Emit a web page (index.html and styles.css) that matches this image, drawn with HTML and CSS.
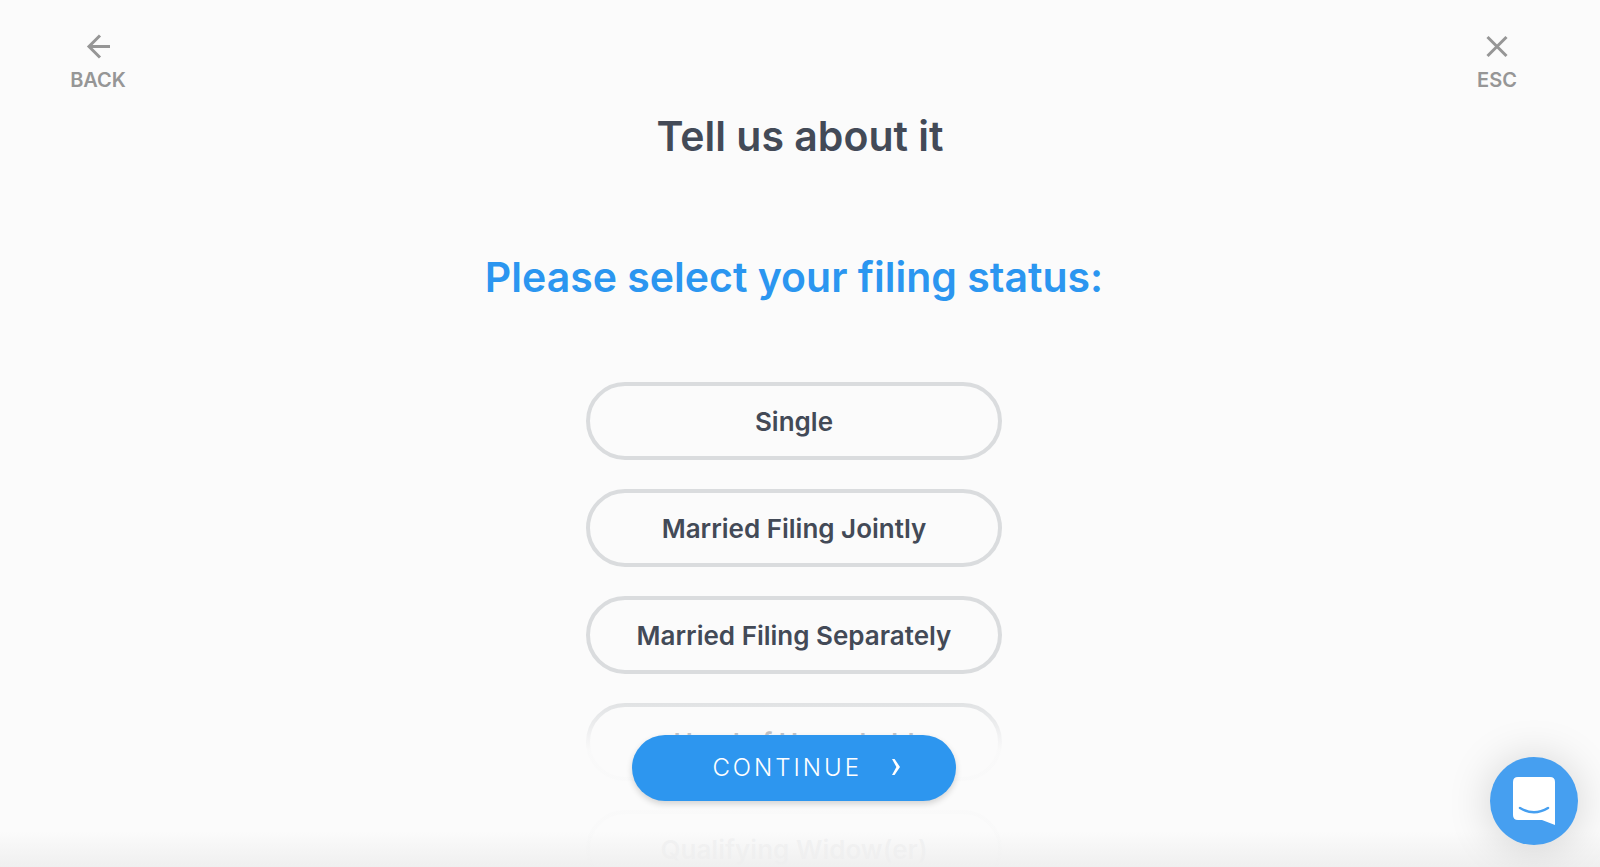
FILE: index.html
```html
<!DOCTYPE html>
<html lang="en">
<head>
<meta charset="utf-8">
<meta name="viewport" content="width=device-width, initial-scale=1">
<title>Tell us about it</title>
<link rel="stylesheet" href="styles.css">
</head>
<body>
<div class="page">
  <header class="topbar">
    <button class="nav-button" type="button">
      <svg class="nav-icon" viewBox="0 0 28 28" aria-hidden="true"><path d="M26 14.500H5M16 3.500L5 14.500L16 25.500"/></svg>
      <span>BACK</span>
    </button>
    <h1 class="title">Tell us about it</h1>
    <button class="nav-button nav-button-end" type="button">
      <svg class="nav-icon" viewBox="0 0 28 28" aria-hidden="true"><path d="M4.500 5L23.500 24M23.500 5L4.500 24"/></svg>
      <span>ESC</span>
    </button>
  </header>
  <main class="content">
    <h2 class="question">Please select your filing status:</h2>
    <div class="options">
      <button class="option" type="button">Single</button>
      <button class="option" type="button">Married Filing Jointly</button>
      <button class="option" type="button">Married Filing Separately</button>
      <button class="option" type="button">Head of Household</button>
      <button class="option" type="button">Qualifying Widow(er)</button>
    </div>
  </main>
  <footer class="footer">
    <button class="continue" type="button">
      <span>CONTINUE</span>
      <svg class="chevron" viewBox="0 0 10 18" aria-hidden="true"><path d="M1 1H3.600L9 9L3.600 17H1L5.400 9Z"/></svg>
    </button>
  </footer>
  <button class="chat" type="button" aria-label="Open chat">
    <svg class="chat-icon" viewBox="0 0 42 48" aria-hidden="true">
      <path d="M5 0H37Q42 0 42 5V48L29 43H5Q0 43 0 38V5Q0 0 5 0Z" fill="#fff"/>
      <path d="M7 31Q21 39.500 35 31" fill="none" stroke="#469ff0" stroke-width="2.500" stroke-linecap="round"/>
    </svg>
  </button>
</div>
</body>
</html>
```
FILE: styles.css
```css
* {
  box-sizing: border-box;
}

body {
  margin: 0;
  background: #fbfbfb;
  color: #434a57;
  font-family: Inter, "Liberation Sans", sans-serif;
}

button {
  border: 0;
  padding: 0;
  background: none;
  color: inherit;
  font: inherit;
  cursor: pointer;
}

.page {
  position: relative;
  height: 100vh;
  overflow: hidden;
}

.topbar {
  display: grid;
  grid-template-columns: 1fr auto 1fr;
  padding: 32px 70px 0;
}

.nav-button {
  display: flex;
  flex-direction: column;
  align-items: center;
  align-self: start;
  justify-self: start;
  gap: 8px;
  width: 56px;
  color: #969696;
  font-size: 20px;
  font-weight: 600;
  line-height: 24px;
}

.nav-button-end {
  justify-self: end;
  margin-right: 5px;
}

.nav-icon {
  width: 28px;
  height: 28px;
  fill: none;
  stroke: currentColor;
  stroke-width: 3;
}

.title,
.question {
  margin: 0;
  font-size: 41px;
  font-weight: 600;
  line-height: 52px;
}

.title {
  padding-top: 78px;
}

.content {
  display: flex;
  flex-direction: column;
  align-items: center;
  gap: 79px;
  padding: 89px 12px 0 0;
}

.question {
  color: #2b96f0;
}

.options {
  display: flex;
  flex-direction: column;
  gap: 29px;
  width: 416px;
  max-width: 100%;
}

.option {
  height: 78px;
  border: 4px solid #dadcde;
  border-radius: 39px;
  font-size: 26px;
  font-weight: 600;
}

.footer {
  position: absolute;
  inset: auto 0 0;
  display: flex;
  justify-content: center;
  padding: 45px 12px 66px 0;
  background:
    linear-gradient(to bottom, rgba(238, 238, 238, 0) 80%, rgba(238, 238, 238, 0.9)),
    linear-gradient(to bottom, rgba(251, 251, 251, 0), rgba(251, 251, 251, 0.95) 34%);
}

.continue {
  display: flex;
  align-items: center;
  justify-content: flex-end;
  gap: 29px;
  width: 324px;
  height: 66px;
  padding: 0 55px 2px 0;
  border-radius: 33px;
  background: #2d96ef;
  box-shadow: 0 3px 6px rgba(0, 0, 0, 0.16);
  color: #fff;
  font-size: 24px;
  font-weight: 300;
  letter-spacing: 3px;
}

.chevron {
  width: 10px;
  height: 18px;
  fill: currentColor;
}

.chat {
  position: absolute;
  right: 22px;
  bottom: 22px;
  display: flex;
  align-items: center;
  justify-content: center;
  width: 88px;
  height: 88px;
  border-radius: 50%;
  background: #469ff0;
  box-shadow: 0 2px 44px rgba(0, 0, 0, 0.17);
}

.chat-icon {
  width: 42px;
  height: 48px;
}
```
